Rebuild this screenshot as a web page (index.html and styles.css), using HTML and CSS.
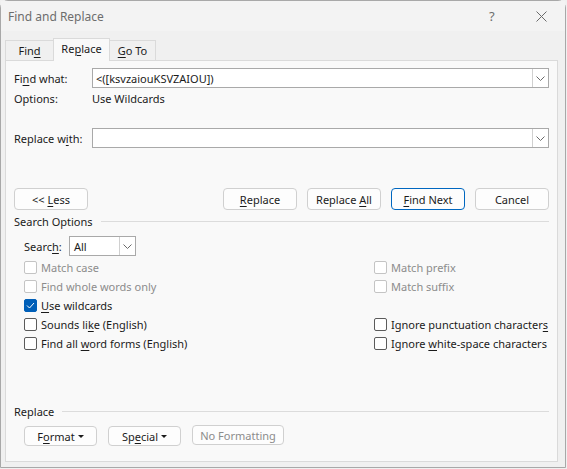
FILE: index.html
```html
<!DOCTYPE html>
<html>
<head>
<meta charset="utf-8">
<link rel="stylesheet" href="styles.css">
</head>
<body>
<div class="window">
  <div class="titlebar">
    <span class="title">Find and Replace</span>
    <span class="help">?</span>
    <span class="close"><svg width="11" height="11" viewBox="0 0 11 11"><path d="M0.5 0.5 L10.5 10.5 M10.5 0.5 L0.5 10.5" stroke="#6a6a6a" stroke-width="1" fill="none"/></svg></span>
  </div>
  <div class="tabs">
    <div class="tab tab-find"><span>Fin<u>d</u></span></div>
    <div class="tab tab-replace active"><span>Re<u>p</u>lace</span></div>
    <div class="tab tab-goto"><span><u>G</u>o To</span></div>
  </div>
  <div class="panel">
    <div class="field-row first">
      <span class="label">Fi<u>n</u>d what:</span>
      <div class="combo">
        <span class="combo-text">&lt;([ksvzaiouKSVZAIOU])</span>
        <span class="combo-btn"><svg width="9" height="5" viewBox="0 0 9 5"><path d="M0.5 0.5 L4.5 4.5 L8.5 0.5" stroke="#6a6a6a" fill="none"/></svg></span>
      </div>
    </div>
    <div class="options-row">
      <span class="label">Options:</span>
      <span class="opt-value">Use Wildcards</span>
    </div>
    <div class="field-row second">
      <span class="label">Replace w<u>i</u>th:</span>
      <div class="combo">
        <span class="combo-text"></span>
        <span class="combo-btn"><svg width="9" height="5" viewBox="0 0 9 5"><path d="M0.5 0.5 L4.5 4.5 L8.5 0.5" stroke="#6a6a6a" fill="none"/></svg></span>
      </div>
    </div>
    <div class="button-row">
      <button class="btn"><span>&lt;&lt; <u>L</u>ess</span></button>
      <div class="btn-group">
        <button class="btn"><span><u>R</u>eplace</span></button>
        <button class="btn"><span>Replace <u>A</u>ll</span></button>
        <button class="btn default"><span><u>F</u>ind Next</span></button>
        <button class="btn"><span>Cancel</span></button>
      </div>
    </div>
    <div class="section-head head-search"><span>Search Options</span><span class="rule"></span></div>
    <div class="search-row">
      <span class="search-label">Searc<u>h</u>:</span>
      <div class="select">
        <span class="select-text">All</span>
        <span class="select-btn"><svg width="9" height="5" viewBox="0 0 9 5"><path d="M0.5 0.5 L4.5 4.5 L8.5 0.5" stroke="#6a6a6a" fill="none"/></svg></span>
      </div>
    </div>
    <div class="checks">
      <div class="check disabled"><span class="box"></span><span>Match case</span></div>
      <div class="check disabled"><span class="box"></span><span>Match prefix</span></div>
      <div class="check disabled"><span class="box"></span><span>Find whole words only</span></div>
      <div class="check disabled"><span class="box"></span><span>Match suffix</span></div>
      <div class="check"><span class="box checked"><svg width="9" height="7" viewBox="0 0 9 7"><path d="M1 3.5 L3.5 6 L8 1" stroke="#fff" stroke-width="1" fill="none"/></svg></span><span><u>U</u>se wildcards</span></div>
      <div class="check empty"></div>
      <div class="check"><span class="box"></span><span>Sounds li<u>k</u>e (English)</span></div>
      <div class="check"><span class="box"></span><span>Ignore punctuation character<u>s</u></span></div>
      <div class="check"><span class="box"></span><span>Find all <u>w</u>ord forms (English)</span></div>
      <div class="check"><span class="box"></span><span>Ignore <u>w</u>hite-space characters</span></div>
    </div>
    <div class="section-head head-replace"><span>Replace</span><span class="rule"></span></div>
    <div class="format-row">
      <button class="btn small"><span>F<u>o</u>rmat</span><span class="caret"></span></button>
      <button class="btn small"><span>Sp<u>e</u>cial</span><span class="caret"></span></button>
      <button class="btn small disabled-btn"><span>No Formatting</span></button>
    </div>
  </div>
</div>
</body>
</html>
```
FILE: styles.css
```css
html, body {
  margin: 0;
  padding: 0;
  background: #f0f0f0;
}
body {
  font-family: "Noto Sans", "Open Sans", sans-serif;
  font-size: 11px;
  color: #1b1b1b;
}
u {
  text-decoration: underline;
  text-underline-offset: 2px;
}
.window {
  width: 566px;
  height: 468px;
  box-sizing: border-box;
  border: 1px solid #a8a8a8;
  border-radius: 8px 8px 0 0;
  background: #f0f0f0;
  display: flex;
  flex-direction: column;
}
.titlebar {
  height: 30px;
  display: flex;
  align-items: center;
  padding-left: 7px;
  background: #f3f3f3;
}
.title {
  color: #6d6d6d;
  font-size: 12px;
}
.help {
  margin-left: auto;
  color: #6d6d6d;
  font-size: 13px;
  width: 14px;
}
.close {
  width: 11px;
  height: 11px;
  margin-left: 33px;
  margin-right: 18px;
  display: flex;
}
.tabs {
  display: flex;
  align-items: flex-end;
  height: 22px;
  margin-top: 7px;
  padding-left: 4px;
}
.tab {
  height: 20px;
  box-sizing: border-box;
  border: 1px solid #dadada;
  border-bottom: none;
  display: flex;
  align-items: center;
  justify-content: center;
  background: #f0f0f0;
  position: relative;
  z-index: 1;
}
.tab-find { width: 48px; border-right: none; }
.tab-replace { width: 57px; }
.tab-goto { width: 46px; border-left: none; }
.tab.active {
  height: 23px;
  background: #f9f9f9;
  margin-bottom: -1px;
  padding-bottom: 3px;
}
.panel {
  margin-left: 4px;
  width: 553px;
  height: 402px;
  box-sizing: border-box;
  border: 1px solid #dadada;
  background: #f9f9f9;
  padding-left: 8px;
  display: flex;
  flex-direction: column;
}
.field-row {
  display: flex;
  align-items: center;
  height: 20px;
}
.field-row.first { margin-top: 7px; }
.field-row.second { margin-top: 20px; }
.label {
  width: 78px;
  flex: none;
}
.combo {
  width: 457px;
  height: 20px;
  box-sizing: border-box;
  border: 1px solid #a9a9a9;
  background: #fff;
  display: flex;
  align-items: center;
}
.combo-text {
  flex: 1;
  padding-left: 3px;
}
.combo-btn, .select-btn {
  width: 16px;
  height: 18px;
  box-sizing: border-box;
  border-left: 1px solid #d0d0d0;
  display: flex;
  align-items: center;
  justify-content: center;
}
.options-row {
  display: flex;
  align-items: center;
  height: 20px;
}
.button-row {
  margin-top: 40px;
  display: flex;
  width: 535px;
  justify-content: space-between;
}
.btn-group {
  display: flex;
  gap: 10px;
}
.btn {
  width: 74px;
  height: 22px;
  box-sizing: border-box;
  border: 1px solid #d0d0d0;
  border-radius: 4px;
  background: #fdfdfd;
  font-family: inherit;
  font-size: 11px;
  color: #1b1b1b;
  padding: 0;
  display: flex;
  align-items: center;
  justify-content: center;
  white-space: nowrap;
}
.btn.default {
  border-color: #0067c0;
}
.section-head {
  display: flex;
  align-items: center;
  height: 16px;
  width: 535px;
}
.section-head .rule {
  flex: 1;
  height: 1px;
  background: #dcdcdc;
  margin-left: 8px;
}
.head-search { margin-top: 3px; }
.head-replace { margin-top: 50px; }
.search-row {
  display: flex;
  align-items: center;
  margin-top: 7px;
  padding-left: 10px;
  height: 20px;
}
.search-label {
  width: 45px;
}
.select {
  width: 67px;
  height: 20px;
  box-sizing: border-box;
  border: 1px solid #a9a9a9;
  background: #fff;
  display: flex;
  align-items: center;
}
.select-text {
  flex: 1;
  padding-left: 4px;
}
.checks {
  margin-top: 2px;
  padding-left: 10px;
  display: grid;
  grid-template-columns: 350px 175px;
  grid-auto-rows: 19px;
}
.check {
  display: flex;
  align-items: center;
  gap: 4px;
  white-space: nowrap;
}
.check .box {
  width: 13px;
  height: 13px;
  flex: none;
  box-sizing: border-box;
  border: 1px solid #5b5b5b;
  border-radius: 2px;
  background: #fff;
  display: flex;
  align-items: center;
  justify-content: center;
}
.check.disabled {
  color: #8c8c8c;
}
.check.disabled .box {
  border-color: #c4c4c4;
}
.check .box.checked {
  background: #005fb8;
  border-color: #005fb8;
}
.format-row {
  display: flex;
  gap: 11px;
  margin-top: 7px;
  padding-left: 10px;
}
.btn.small {
  height: 20px;
  width: 73px;
  gap: 3px;
}
.btn.disabled-btn {
  width: 92px;
  color: #8c8c8c;
  margin-top: -1px;
}
.caret {
  width: 0;
  height: 0;
  border-left: 3px solid transparent;
  border-right: 3px solid transparent;
  border-top: 3px solid #1b1b1b;
}
```
